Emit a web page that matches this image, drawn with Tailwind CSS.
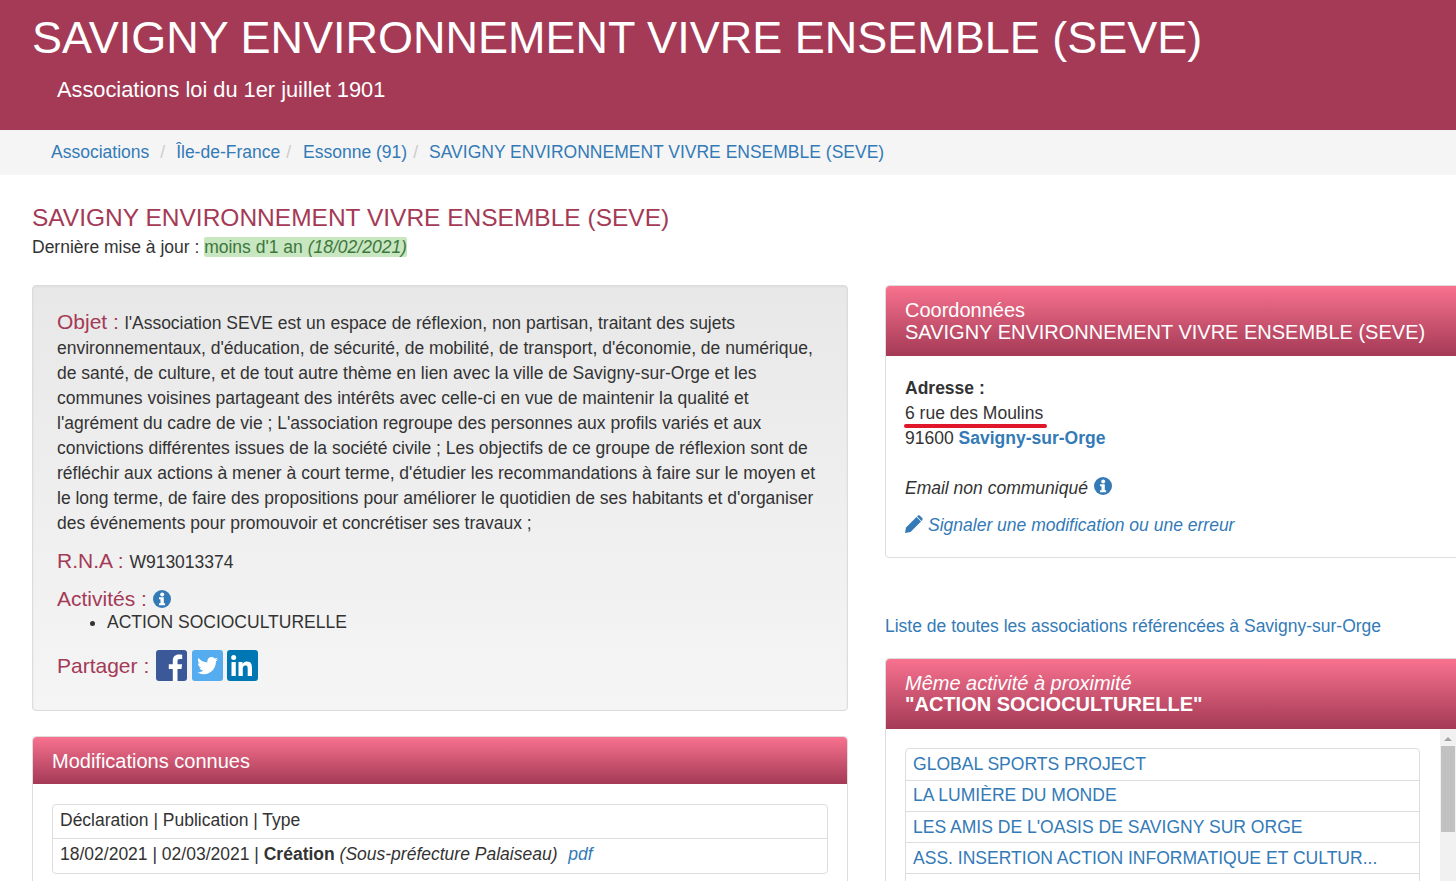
<!DOCTYPE html>
<html lang="fr">
<head>
    <meta charset="UTF-8">
    <meta name="viewport" content="width=device-width, initial-scale=1.0">
    <title>SAVIGNY ENVIRONNEMENT VIVRE ENSEMBLE (SEVE)</title>
    <script src="https://cdn.jsdelivr.net/npm/@tailwindcss/browser@4"></script>
</head>
<body class="h-[881px] overflow-hidden bg-white font-['Liberation_Sans',Arial,sans-serif] text-[17.5px] leading-[25px] text-[#333]">

    <!-- header -->
    <header class="h-[130px] bg-[#a43a56] pl-[32px] pt-[11px] text-white">
        <h1 class="text-[45px] leading-[54px]">SAVIGNY ENVIRONNEMENT VIVRE ENSEMBLE (SEVE)</h1>
        <p class="mt-[12px] pl-[25px] text-[21.8px] leading-[25px]">Associations loi du 1er juillet 1901</p>
    </header>

    <!-- breadcrumb -->
    <nav class="flex h-[45px] items-center bg-[#f5f5f5] pl-[51px] text-[#337ab7]">
        <a href="#">Associations</a>
        <span class="px-[11px] text-[#ccc]">/</span>
        <a href="#">Île-de-France</a>
        <span class="pl-[6px] pr-[12px] text-[#ccc]">/</span>
        <a href="#">Essonne (91)</a>
        <span class="pl-[6px] pr-[11px] text-[#ccc]">/</span>
        <a href="#" class="whitespace-nowrap">SAVIGNY ENVIRONNEMENT VIVRE ENSEMBLE (SEVE)</a>
    </nav>

    <main class="pl-[32px]">
        <h2 class="mt-[28px] text-[24.5px] leading-[29px] text-[#a43a56]">SAVIGNY ENVIRONNEMENT VIVRE ENSEMBLE (SEVE)</h2>
        <p class="mt-[3px]">Dernière mise à jour : <span class="rounded-[2px] bg-[#c8e6c0] text-[#3c763d]">moins d'1 an <i>(18/02/2021)</i></span></p>

        <div class="mt-[25px] flex items-start">
            <!-- left column -->
            <div class="w-[816px] shrink-0">
                <section class="h-[426px] rounded-[4px] border border-[#dcdcdc] bg-gradient-to-b from-[#e8e8e8] to-[#f5f5f5] px-[24px] pt-[23px] shadow-[inset_0_1px_3px_rgba(0,0,0,0.05)]">
                    <p><span class="mr-[1px] text-[21px] text-[#a43a56]">Objet :</span> l'Association SEVE est un espace de réflexion, non partisan, traitant des sujets environnementaux, d'éducation, de sécurité, de mobilité, de transport, d'économie, de numérique, de santé, de culture, et de tout autre thème en lien avec la ville de Savigny-sur-Orge et les communes voisines partageant des intérêts avec celle-ci en vue de maintenir la qualité et l'agrément du cadre de vie ; L'association regroupe des personnes aux profils variés et aux convictions différentes issues de la société civile ; Les objectifs de ce groupe de réflexion sont de réfléchir aux actions à mener à court terme, d'étudier les recommandations à faire sur le moyen et le long terme, de faire des propositions pour améliorer le quotidien de ses habitants et d'organiser des événements pour promouvoir et concrétiser ses travaux ;</p>
                    <p class="mt-[12px]"><span class="mr-[1px] text-[21px] text-[#a43a56]">R.N.A :</span> W913013374</p>
                    <p class="mt-[11px] flex items-center gap-[6px]"><span class="text-[21px] text-[#a43a56]">Activités :</span>
                        <svg class="size-[18px] fill-[#337ab7]" viewBox="0 0 18 18"><circle cx="9" cy="9" r="9"/><circle cx="9.200" cy="4.400" r="2" fill="#fff"/><path fill="#fff" d="M6 7.300h4.800v6h1.300V15.200H6v-1.900h1.500V9.200H6z"/></svg>
                    </p>
                    <ul class="-mt-[1px] list-disc pl-[50px]"><li>ACTION SOCIOCULTURELLE</li></ul>
                    <div class="mt-[15px] flex items-center">
                        <span class="mr-[7px] text-[21px] text-[#a43a56]">Partager :</span>
                        <svg class="size-[31px]" viewBox="0 0 31 31"><rect width="31" height="31" rx="3" fill="#3b5998"/><path fill="#fff" d="M21.500 31V19h4l.6-4.700h-4.600v-3c0-1.400.4-2.300 2.300-2.300h2.400V4.800c-.4-.1-1.900-.2-3.500-.2-3.500 0-5.900 2.100-5.900 6.100v3.600h-4V19h4v12z"/></svg>
                        <svg class="ml-[5px] size-[31px]" viewBox="0 0 31 31"><rect width="31" height="31" rx="3" fill="#55acee"/><path fill="#fff" d="M26 9.200c-.8.400-1.600.6-2.500.7.900-.5 1.600-1.400 1.900-2.400-.8.500-1.800.9-2.700 1-.8-.8-1.900-1.400-3.100-1.400-2.400 0-4.300 1.900-4.300 4.300 0 .3 0 .7.100 1-3.600-.2-6.800-1.900-8.900-4.500-.4.600-.6 1.400-.6 2.200 0 1.500.8 2.800 1.900 3.600-.7 0-1.400-.2-1.900-.5v.1c0 2.100 1.500 3.800 3.400 4.200-.4.100-.7.200-1.100.2-.3 0-.5 0-.8-.1.500 1.700 2.100 3 4 3-1.500 1.100-3.300 1.800-5.300 1.800-.3 0-.7 0-1-.1 1.900 1.200 4.200 1.900 6.600 1.900 7.900 0 12.200-6.600 12.200-12.200v-.6c.8-.6 1.500-1.400 2.100-2.200z"/></svg>
                        <svg class="ml-[4px] size-[31px]" viewBox="0 0 31 31"><rect width="31" height="31" rx="3" fill="#0077b5"/><path fill="#fff" d="M4.500 12h4.300v14H4.500zM6.650 5a2.500 2.500 0 1 1 0 5 2.500 2.500 0 0 1 0-5zM11.500 12h4.100v1.900h.1c.6-1.100 2-2.300 4.100-2.300 4.400 0 5.200 2.900 5.200 6.600V26h-4.300v-6.900c0-1.600 0-3.700-2.300-3.700s-2.600 1.800-2.600 3.600v7h-4.300z"/></svg>
                    </div>
                </section>

                <section class="mt-[25px] h-[300px] rounded-t-[4px] border border-[#ddd]">
                    <div class="flex h-[47px] items-center rounded-t-[4px] bg-gradient-to-b from-[#f8728f] to-[#a43a56] pl-[19px] pt-[1px] text-[20px] text-[#fff]">Modifications connues</div>
                    <div class="px-[19px] pt-[20px]">
                        <div class="rounded-[4px] border border-[#ddd]">
                            <div class="h-[34px] border-b border-[#ddd] px-[7px] pt-[3px]">Déclaration | Publication | Type</div>
                            <div class="h-[34px] px-[7px] pt-[3px]">18/02/2021 | 02/03/2021 | <b>Création</b> <i>(Sous-préfecture Palaiseau)</i> <a href="#" class="ml-[6px] italic text-[#337ab7]">pdf</a></div>
                        </div>
                    </div>
                </section>
            </div>

            <!-- right column -->
            <div class="ml-[37px] w-[600px] shrink-0">
                <section class="h-[273px] rounded-[4px] border border-[#ddd]">
                    <div class="h-[70px] rounded-t-[4px] bg-gradient-to-b from-[#f8728f] to-[#a43a56] pl-[19px] pt-[13px] text-[20px] leading-[22px] text-white">
                        <p>Coordonnées</p>
                        <p>SAVIGNY ENVIRONNEMENT VIVRE ENSEMBLE (SEVE)</p>
                    </div>
                    <div class="relative px-[19px] pt-[20px]">
                        <p><b>Adresse :</b></p>
                        <p class="relative">6 rue des Moulins<span class="absolute left-[-1px] top-[23px] h-[4px] w-[143px] rounded-full bg-[#e0162b]"></span></p>
                        <p>91600 <a href="#" class="font-bold text-[#337ab7]">Savigny-sur-Orge</a></p>
                        <p class="mt-[25px] flex items-center gap-[6px] italic">Email non communiqué
                            <svg class="mb-[5px] size-[18px] fill-[#337ab7]" viewBox="0 0 18 18"><circle cx="9" cy="9" r="9"/><circle cx="9.200" cy="4.400" r="2" fill="#fff"/><path fill="#fff" d="M6 7.300h4.800v6h1.300V15.200H6v-1.900h1.500V9.200H6z"/></svg>
                        </p>
                        <p class="mt-[12px] flex items-center gap-[5px] italic text-[#337ab7]">
                            <svg class="mb-[3px] size-[18px] fill-[#337ab7]" viewBox="0 0 18 18"><path d="M0 18l1-5.500L11.500 2l4.500 4.500L5.500 17zM12.800.8c.6-.6 1.500-.6 2.100 0l2.300 2.300c.6.600.6 1.500 0 2.100l-.7.700-4.400-4.400z"/></svg>
                            Signaler une modification ou une erreur
                        </p>
                    </div>
                </section>

                <a href="#" class="mt-[56px] block text-[#337ab7]">Liste de toutes les associations référencées à Savigny-sur-Orge</a>

                <section class="mt-[19px] rounded-t-[4px] border border-[#ddd]">
                    <div class="h-[70px] rounded-t-[4px] bg-gradient-to-b from-[#f8728f] to-[#a43a56] pl-[19px] pt-[14px] text-[20px] leading-[21px] text-white">
                        <p class="italic">Même activité à proximité</p>
                        <p class="font-bold">"ACTION SOCIOCULTURELLE"</p>
                    </div>
                    <div class="relative h-[200px] overflow-hidden pl-[19px] pt-[19px]">
                        <ul class="w-[515px] rounded-[4px] border border-[#ddd] text-[17.55px] text-[#337ab7]">
                            <li class="h-[32px] truncate border-b border-[#ddd] px-[7px] pt-[3px]">GLOBAL SPORTS PROJECT</li>
                            <li class="h-[31px] truncate border-b border-[#ddd] px-[7px] pt-[2px]">LA LUMIÈRE DU MONDE</li>
                            <li class="h-[31px] truncate border-b border-[#ddd] px-[7px] pt-[3px]">LES AMIS DE L'OASIS DE SAVIGNY SUR ORGE</li>
                            <li class="h-[31px] truncate border-b border-[#ddd] px-[7px] pt-[3px]">ASS. INSERTION ACTION INFORMATIQUE ET CULTUR...</li>
                            <li class="h-[31px]"></li>
                        </ul>
                        <div class="absolute left-[554px] top-0 h-full w-[16px] bg-[#f1f1f1]">
                            <svg class="mx-auto mt-[6px] size-[8px] fill-[#a3a3a3]" viewBox="0 0 8 8"><path d="M0 6l4-4 4 4z"/></svg>
                            <div class="mx-[1px] mt-[3px] h-[86px] bg-[#c1c1c1]"></div>
                        </div>
                    </div>
                </section>
            </div>
        </div>
    </main>
</body>
</html>
